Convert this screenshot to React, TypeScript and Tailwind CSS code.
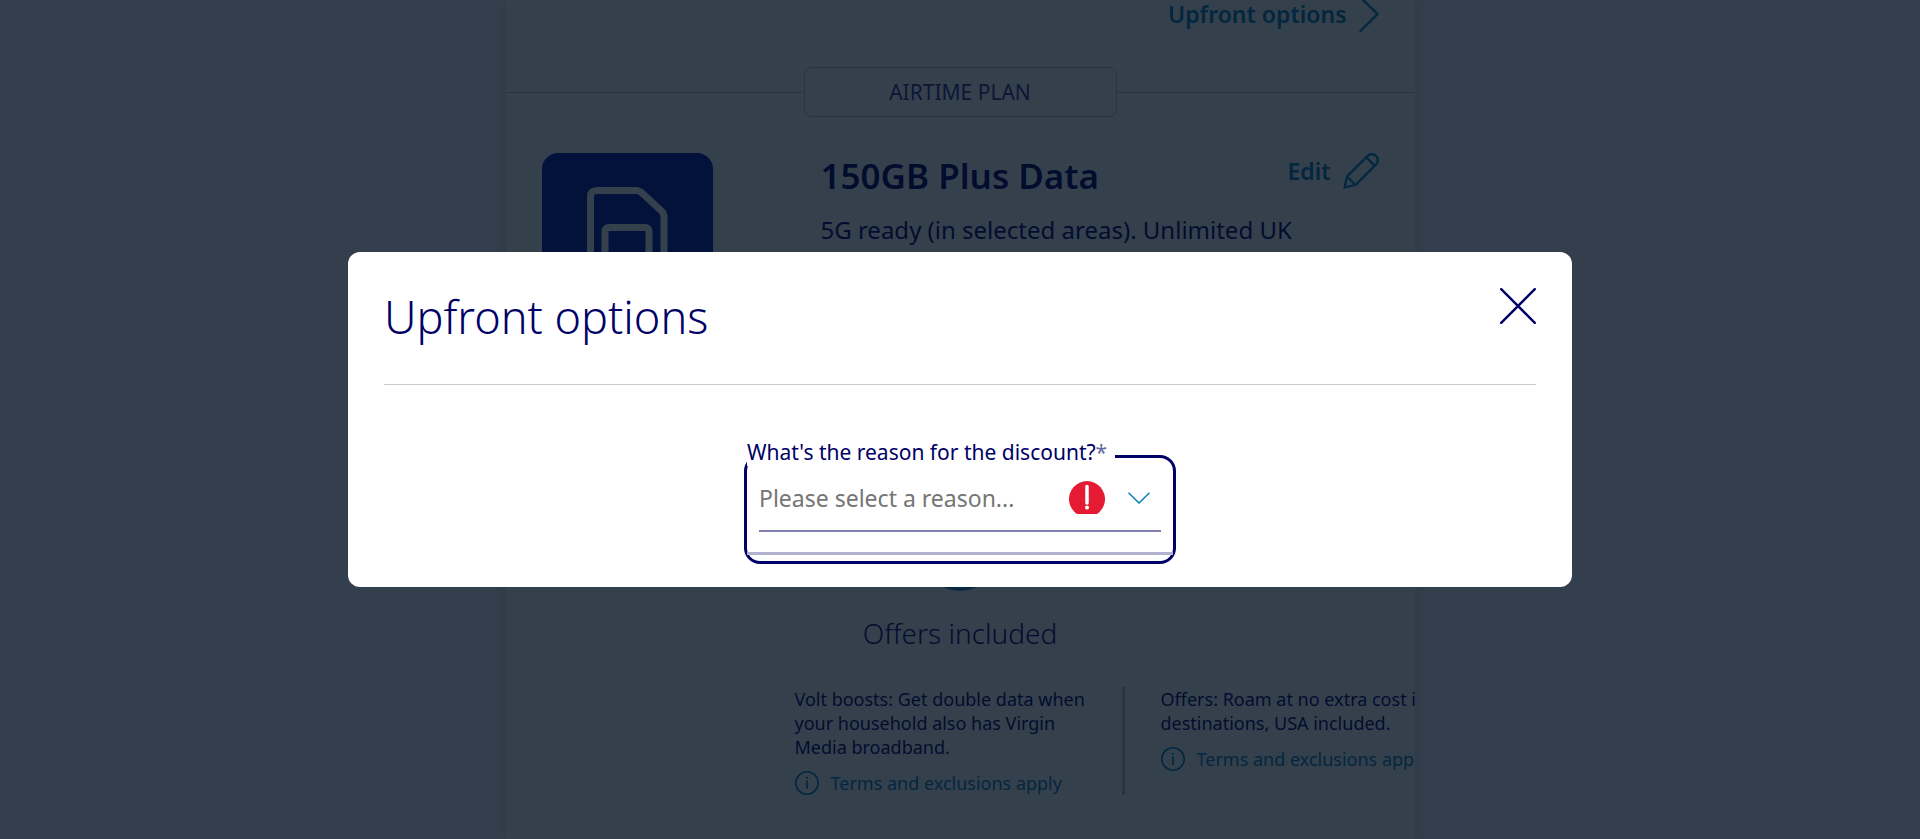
import type { ReactNode } from "react";

function InfoIcon() {
  return (
    <svg viewBox="0 0 24 24" className="size-6 shrink-0" fill="none" stroke="currentColor" aria-hidden="true">
      <circle cx="12" cy="12" r="11.2" strokeWidth="1.6" />
      <path d="M12 9.5V18" strokeWidth="1.7" />
      <path d="M12 6v1.8" strokeWidth="1.9" />
    </svg>
  );
}

function Offer({ children }: { children: ReactNode }) {
  return (
    <li className="w-[291px] shrink-0">
      <p className="text-[18px] leading-6 whitespace-nowrap">{children}</p>
      <a href="#terms" className="mt-3 flex items-center gap-3 text-[18px] leading-6 whitespace-nowrap text-[#0080b3]">
        <InfoIcon />
        Terms and exclusions apply
      </a>
    </li>
  );
}

function Basket() {
  return (
    <main className="mx-auto min-h-screen w-full max-w-[909px] overflow-hidden bg-white shadow-[0_0_18px_rgba(0,0,0,0.14)]">
      <div className="-mt-1 flex justify-end px-9">
        <a href="#upfront" className="flex items-center gap-3 text-[23px] leading-9 font-semibold text-[#0080b3]">
          Upfront options
          <svg viewBox="0 0 20 36" className="h-9 w-5" fill="none" stroke="currentColor" strokeWidth="2.3" strokeLinecap="round" aria-hidden="true">
            <path d="M1.5 1.5 18.5 18 1.5 35" />
          </svg>
        </a>
      </div>

      <div className="mt-[35px] flex items-center">
        <span className="h-px flex-1 bg-[#c4c4c4]" />
        <h2 className="w-[313px] rounded-lg border border-[#c4c4c4] text-center text-[21px] leading-12 text-[#333385]">AIRTIME PLAN</h2>
        <span className="h-px flex-1 bg-[#c4c4c4]" />
      </div>

      <section className="mt-9 flex px-9">
        <div className="flex size-[171px] shrink-0 justify-center rounded-2xl bg-[#0019a5] pt-[34px] text-white">
          <svg viewBox="0 0 82 104" className="h-[104px] w-[82px]" fill="none" stroke="currentColor" strokeWidth="7" strokeLinejoin="round" aria-hidden="true">
            <path d="M11 3.5H50q3.500 0 6 2.500L75.500 24q2.500 2.500 2.500 6V94q0 6.500-6.500 6.500H11q-6.500 0-6.500-6.500V10Q4.500 3.500 11 3.500Z" />
            <rect x="19" y="40.500" width="44" height="44" rx="3.500" />
          </svg>
        </div>
        <div className="ml-[108px] flex-1">
          <div className="flex items-start justify-between">
            <h3 className="text-[35px] leading-[46px] font-semibold">150GB Plus Data</h3>
            <a href="#edit" className="flex items-center gap-3 text-[23px] leading-9 font-semibold text-[#0080b3]">
              Edit
              <svg viewBox="0 0 36 36" className="size-9" fill="none" stroke="currentColor" strokeWidth="2.3" strokeLinejoin="round" aria-hidden="true">
                <path d="M1.500 34.500 4 23.500 24.500 3a6 6 0 0 1 8.500 8.500L12.500 32Z" />
                <path d="M4 23.500 12.500 32M23.500 4.500 31.500 12.500" />
              </svg>
            </a>
          </div>
          <p className="mt-[13px] text-[24px] leading-9">5G ready (in selected areas). Unlimited UK<br />minutes and texts.</p>
        </div>
      </section>

      <section className="mt-[195px] flex flex-col items-center">
        <span className="size-[72px] rounded-full bg-[#2a90b8]" />
        <h3 className="mt-6 text-[28px] leading-9 font-light">Offers included</h3>
      </section>
      <ul className="mt-9 flex gap-9 pl-[289px]">
        <Offer>Volt boosts: Get double data when<br />your household also has Virgin<br />Media broadband.</Offer>
        <li className="w-[3px] shrink-0 bg-[#c4c4c4]" aria-hidden="true" />
        <Offer>Offers: Roam at no extra cost in 75<br />destinations, USA included.</Offer>
      </ul>
    </main>
  );
}

function UpfrontDialog() {
  return (
    <div role="dialog" aria-modal="true" aria-labelledby="dialog-title" className="w-full max-w-[1224px] rounded-xl bg-white p-9 pb-[23px]">
      <header className="flex items-start justify-between border-b border-[#cccccc] pb-[38px]">
        <h1 id="dialog-title" className="text-[45px] leading-[58px] font-light">Upfront options</h1>
        <button type="button" aria-label="Close">
          <svg viewBox="0 0 36 36" className="size-9" stroke="currentColor" strokeWidth="2.4" strokeLinecap="round" aria-hidden="true">
            <path d="M1.200 1.200 34.800 34.800M34.800 1.200 1.200 34.800" />
          </svg>
        </button>
      </header>

      <form className="relative mx-auto mt-[70px] h-[109px] w-[432px] rounded-2xl border-3 border-[#000066] px-3">
        <label htmlFor="reason" className="absolute -top-5 left-0 bg-white pr-2 text-[21px] leading-7 whitespace-nowrap">
          What's the reason for the discount?<span className="text-[#6666a3]">*</span>
        </label>
        <div className="relative mt-3 border-b-2 border-[#8080b3]">
          <select id="reason" defaultValue="" className="h-[60px] w-full appearance-none bg-transparent pb-1 text-[23px] text-[#757575] outline-none">
            <option value="">Please select a reason...</option>
          </select>
          <svg viewBox="0 0 36 34" className="pointer-events-none absolute top-[10px] right-14 h-[34px] w-9" aria-hidden="true">
            <path d="M8 34A18 18 0 1 1 28 34Z" fill="#e41b32" />
            <path d="M18 6.500V23" stroke="#fff" strokeWidth="3.500" strokeLinecap="round" />
            <circle cx="18" cy="27.500" r="2" fill="#fff" />
          </svg>
          <svg viewBox="0 0 22 12" className="pointer-events-none absolute top-[22px] right-[11px] h-3 w-[22px] text-[#0080b3]" fill="none" stroke="currentColor" strokeWidth="1.500" aria-hidden="true">
            <path d="M.5.8 11 11 21.500.8" />
          </svg>
        </div>
        <div className="-mx-3 mt-5 h-[3px] bg-[#b3b3d1]" />
      </form>
    </div>
  );
}

export default function App() {
  return (
    <div className="h-screen overflow-hidden bg-[#f7f9fc] font-['Noto_Sans','Open_Sans',sans-serif] text-[#000066]">
      <Basket />
      <div className="fixed inset-0 flex items-center justify-center bg-[#021020]/80">
        <UpfrontDialog />
      </div>
    </div>
  );
}
